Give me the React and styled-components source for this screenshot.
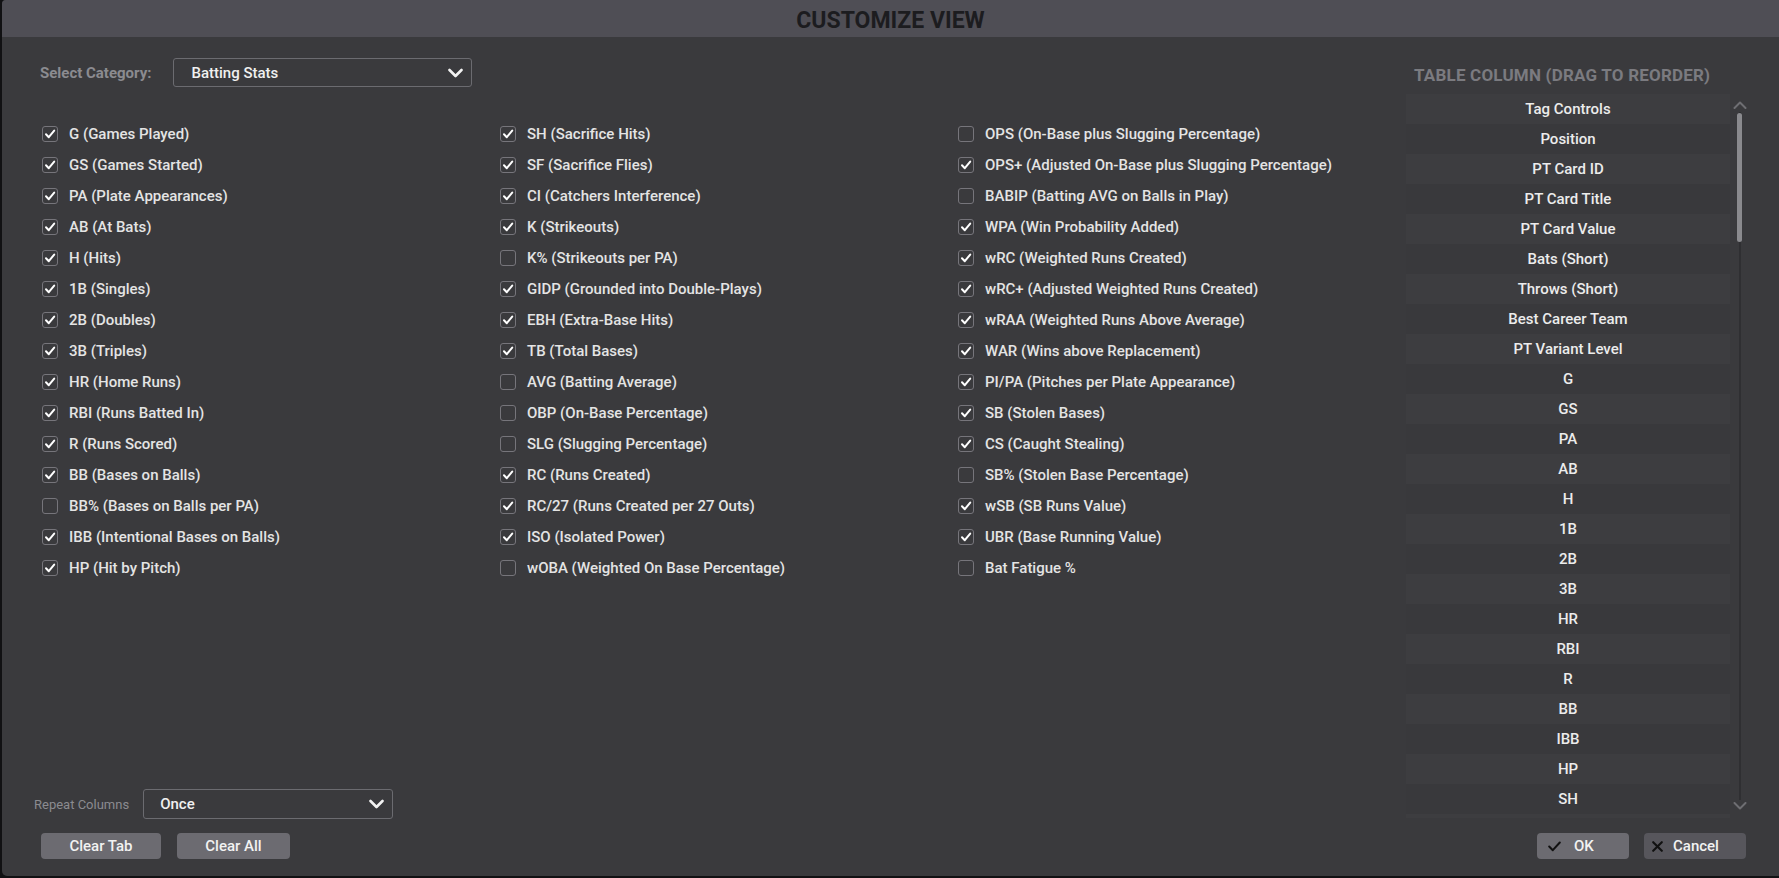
import React from "react";
import styled, { createGlobalStyle } from "styled-components";

const Global = createGlobalStyle`
  html, body { margin: 0; padding: 0; background: #111113; }
  body { font-family: Roboto, "Noto Sans", sans-serif; overflow: hidden; }
  * { box-sizing: border-box; }
`;

const Page = styled.div`
  width: 1779px;
  height: 878px;
  padding-left: 2px;
  background: #111113;
`;

const Dialog = styled.div`
  width: 1777px;
  height: 876px;
  background: #3a3a3d;
  border-radius: 4px 0 0 5px;
  display: flex;
  flex-direction: column;
  overflow: hidden;
`;

const TitleBar = styled.div`
  height: 37px;
  flex: none;
  background: #4f4e55;
  display: flex;
  align-items: center;
  justify-content: center;
  padding-top: 3px;
  font-size: 23px;
  font-weight: 700;
  color: #1c1c1f;
`;

const Body = styled.div`
  flex: 1;
  display: flex;
  flex-direction: column;
  padding-bottom: 17px;
`;

const Main = styled.div`
  height: 782px;
  display: flex;
`;

const LeftPane = styled.div`
  flex: 1;
  min-width: 0;
  display: flex;
  flex-direction: column;
  padding: 21px 0 0 38px;
`;

const CategoryRow = styled.div`
  display: flex;
  align-items: center;
  gap: 22px;
  height: 29px;
`;

const FieldLabel = styled.span`
  color: #8b8b90;
  font-size: ${(p) => (p.$small ? "13px" : "15px")};
  font-weight: ${(p) => (p.$small ? 400 : 700)};
  white-space: nowrap;
`;

const Select = styled.div`
  width: ${(p) => p.$w}px;
  height: ${(p) => p.$h}px;
  border: 1px solid #6b6b70;
  border-radius: 3px;
  display: flex;
  align-items: center;
  justify-content: space-between;
  padding: 0 ${(p) => p.$pr}px 0 ${(p) => p.$pl}px;
  color: #f0f0f0;
  font-size: 15px;
  font-weight: 500;
`;

const CheckGrid = styled.div`
  margin-top: 31px;
  margin-left: 2px;
  display: grid;
  grid-template-columns: 458px 458px 1fr;
  grid-auto-flow: column;
  grid-template-rows: repeat(15, 31px);
`;

const CheckItem = styled.label`
  display: flex;
  align-items: center;
  gap: 11px;
  color: #e4e4e4;
  font-size: 15px;
  font-weight: 500;
  white-space: nowrap;
`;

const Box = styled.span`
  width: 16px;
  height: 16px;
  border: 1.5px solid #76757b;
  border-radius: 3px;
  display: flex;
  align-items: center;
  justify-content: center;
  flex: none;
`;

const RepeatRow = styled.div`
  margin-top: auto;
  margin-left: -6px;
  display: flex;
  align-items: center;
  gap: 14px;
  height: 30px;
`;

const RightPane = styled.div`
  width: 373px;
  flex: none;
  display: flex;
  flex-direction: column;
  padding-top: 28px;
`;

const PaneHeading = styled.div`
  height: 20px;
  line-height: 20px;
  margin: 0 0 9px 8px;
  color: #7b7b80;
  font-size: 17px;
  font-weight: 700;
  letter-spacing: 0.2px;
  white-space: nowrap;
`;

const ListWrap = styled.div`
  height: 724px;
  display: flex;
`;

const ListViewport = styled.div`
  width: 324px;
  height: 100%;
  overflow: hidden;
  background: #3d3d40;
`;

const ListRow = styled.div`
  height: 30px;
  display: flex;
  align-items: center;
  justify-content: center;
  background: ${(p) => (p.$alt ? "#3d3d40" : "#39393c")};
  color: #ececec;
  font-size: 15px;
  font-weight: 500;
`;

const ScrollCol = styled.div`
  width: 20px;
  display: flex;
  flex-direction: column;
  align-items: center;
  padding-top: 7px;
`;

const Track = styled.div`
  width: 2px;
  flex: 1;
  margin: 3px 0 2px;
  background: #2f2f32;
  position: relative;
`;

const Thumb = styled.div`
  position: absolute;
  left: -2px;
  top: 1px;
  width: 5px;
  height: 129px;
  border-radius: 3px;
  background: #8a8a8e;
`;

const ScrollEnd = styled.div`
  height: 8px;
`;

const Footer = styled.div`
  margin-top: 14px;
  height: 26px;
  display: flex;
  justify-content: space-between;
  padding: 0 33px 0 39px;
`;

const ButtonGroup = styled.div`
  display: flex;
  gap: ${(p) => p.$gap}px;
`;

const Button = styled.button`
  width: ${(p) => p.$w}px;
  height: 26px;
  border: none;
  border-radius: 4px;
  background: ${(p) => (p.$dark ? "#57565c" : "#6c6b71")};
  color: #f2f2f2;
  font-family: Roboto, sans-serif;
  font-size: 15px;
  font-weight: 500;
  display: flex;
  align-items: center;
  justify-content: ${(p) => (p.$icon ? "flex-start" : "center")};
  padding: ${(p) => (p.$icon ? `0 0 0 ${p.$pl}px` : "0")};
  gap: ${(p) => p.$gap || 0}px;
`;

const Chevron = ({ color = "#f2f2f2" }) => (
  <svg width="15" height="10" viewBox="0 0 15 10">
    <polyline points="1.5,2 7.5,8 13.5,2" fill="none" stroke={color} strokeWidth="2.6" strokeLinecap="round" strokeLinejoin="round" />
  </svg>
);

const ScrollArrow = ({ up }) => (
  <svg width="14" height="8" viewBox="0 0 14 8">
    <polyline
      points={up ? "1.5,7 7,1.5 12.5,7" : "1.5,1 7,6.5 12.5,1"}
      fill="none"
      stroke="#6e6e72"
      strokeWidth="2"
      strokeLinecap="round"
      strokeLinejoin="round"
    />
  </svg>
);

const Tick = () => (
  <svg width="12" height="12" viewBox="0 0 12 12">
    <polyline points="2,6.3 4.8,9.2 10.2,2.6" fill="none" stroke="#ffffff" strokeWidth="2" strokeLinecap="round" strokeLinejoin="round" />
  </svg>
);

const col1 = [
  ["G (Games Played)", 1],
  ["GS (Games Started)", 1],
  ["PA (Plate Appearances)", 1],
  ["AB (At Bats)", 1],
  ["H (Hits)", 1],
  ["1B (Singles)", 1],
  ["2B (Doubles)", 1],
  ["3B (Triples)", 1],
  ["HR (Home Runs)", 1],
  ["RBI (Runs Batted In)", 1],
  ["R (Runs Scored)", 1],
  ["BB (Bases on Balls)", 1],
  ["BB% (Bases on Balls per PA)", 0],
  ["IBB (Intentional Bases on Balls)", 1],
  ["HP (Hit by Pitch)", 1],
];
const col2 = [
  ["SH (Sacrifice Hits)", 1],
  ["SF (Sacrifice Flies)", 1],
  ["CI (Catchers Interference)", 1],
  ["K (Strikeouts)", 1],
  ["K% (Strikeouts per PA)", 0],
  ["GIDP (Grounded into Double-Plays)", 1],
  ["EBH (Extra-Base Hits)", 1],
  ["TB (Total Bases)", 1],
  ["AVG (Batting Average)", 0],
  ["OBP (On-Base Percentage)", 0],
  ["SLG (Slugging Percentage)", 0],
  ["RC (Runs Created)", 1],
  ["RC/27 (Runs Created per 27 Outs)", 1],
  ["ISO (Isolated Power)", 1],
  ["wOBA (Weighted On Base Percentage)", 0],
];
const col3 = [
  ["OPS (On-Base plus Slugging Percentage)", 0],
  ["OPS+ (Adjusted On-Base plus Slugging Percentage)", 1],
  ["BABIP (Batting AVG on Balls in Play)", 0],
  ["WPA (Win Probability Added)", 1],
  ["wRC (Weighted Runs Created)", 1],
  ["wRC+ (Adjusted Weighted Runs Created)", 1],
  ["wRAA (Weighted Runs Above Average)", 1],
  ["WAR (Wins above Replacement)", 1],
  ["PI/PA (Pitches per Plate Appearance)", 1],
  ["SB (Stolen Bases)", 1],
  ["CS (Caught Stealing)", 1],
  ["SB% (Stolen Base Percentage)", 0],
  ["wSB (SB Runs Value)", 1],
  ["UBR (Base Running Value)", 1],
  ["Bat Fatigue %", 0],
];

const columns = [
  "Tag Controls", "Position", "PT Card ID", "PT Card Title", "PT Card Value",
  "Bats (Short)", "Throws (Short)", "Best Career Team", "PT Variant Level",
  "G", "GS", "PA", "AB", "H", "1B", "2B", "3B", "HR", "RBI", "R", "BB",
  "IBB", "HP", "SH",
];

export default function App() {
  const items = [...col1, ...col2, ...col3];
  return (
    <>
      <Global />
      <Page>
        <Dialog>
          <TitleBar>CUSTOMIZE VIEW</TitleBar>
          <Body>
            <Main>
              <LeftPane>
                <CategoryRow>
                  <FieldLabel>Select Category:</FieldLabel>
                  <Select $w={299} $h={29} $pl={17} $pr={8}>
                    <span>Batting Stats</span>
                    <Chevron />
                  </Select>
                </CategoryRow>
                <CheckGrid>
                  {items.map(([label, on]) => (
                    <CheckItem key={label}>
                      <Box>{on ? <Tick /> : null}</Box>
                      {label}
                    </CheckItem>
                  ))}
                </CheckGrid>
                <RepeatRow>
                  <FieldLabel $small>Repeat Columns</FieldLabel>
                  <Select $w={250} $h={30} $pl={16} $pr={8}>
                    <span>Once</span>
                    <Chevron />
                  </Select>
                </RepeatRow>
              </LeftPane>
              <RightPane>
                <PaneHeading>TABLE COLUMN (DRAG TO REORDER)</PaneHeading>
                <ListWrap>
                  <ListViewport>
                    {columns.map((c, i) => (
                      <ListRow key={c} $alt={i % 2 === 0}>{c}</ListRow>
                    ))}
                  </ListViewport>
                  <ScrollCol>
                    <ScrollArrow up />
                    <Track>
                      <Thumb />
                    </Track>
                    <ScrollArrow />
                    <ScrollEnd />
                  </ScrollCol>
                </ListWrap>
              </RightPane>
            </Main>
            <Footer>
              <ButtonGroup $gap={16}>
                <Button $w={120}>Clear Tab</Button>
                <Button $w={113}>Clear All</Button>
              </ButtonGroup>
              <ButtonGroup $gap={15}>
                <Button $w={92} $icon $pl={11} $gap={13}>
                  <svg width="13" height="11" viewBox="0 0 13 11">
                    <polyline points="1.2,5.5 4.8,9.2 11.8,1.5" fill="none" stroke="#111" strokeWidth="2" strokeLinecap="round" strokeLinejoin="round" />
                  </svg>
                  OK
                </Button>
                <Button $w={102} $icon $dark $pl={8} $gap={10}>
                  <svg width="11" height="11" viewBox="0 0 11 11">
                    <path d="M1.2 1.2 L9.8 9.8 M9.8 1.2 L1.2 9.8" stroke="#111" strokeWidth="2.1" strokeLinecap="round" />
                  </svg>
                  Cancel
                </Button>
              </ButtonGroup>
            </Footer>
          </Body>
        </Dialog>
      </Page>
    </>
  );
}
